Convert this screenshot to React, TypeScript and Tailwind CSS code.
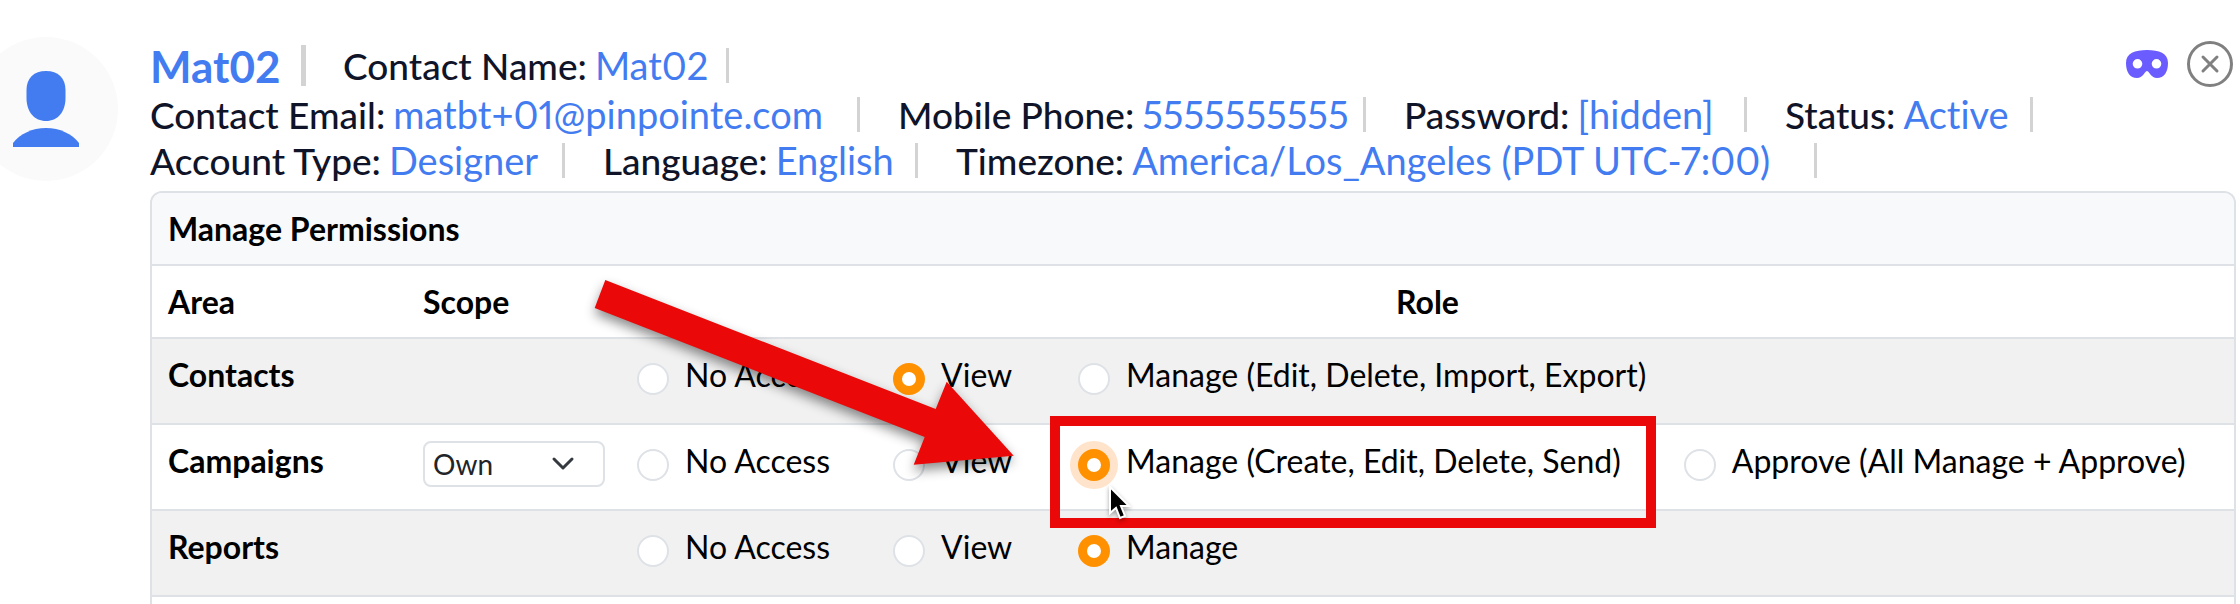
import React from "react";

type Detail = { label: string; value: string; width: string };
type Option = { label: string; checked?: boolean; focused?: boolean };
type Area = { name: string; scope?: string; striped: boolean; options: Option[] };

const lines: Detail[][] = [
  [
    { label: "Contact Email:", value: "matbt+01@pinpointe.com", width: "w-[748px]" },
    { label: "Mobile Phone:", value: "5555555555", width: "w-[506px]" },
    { label: "Password:", value: "[hidden]", width: "w-[381px]" },
    { label: "Status:", value: "Active", width: "w-[286px]" },
  ],
  [
    { label: "Account Type:", value: "Designer", width: "w-[453px]" },
    { label: "Language:", value: "English", width: "w-[353px]" },
    { label: "Timezone:", value: "America/Los_Angeles (PDT UTC-7:00)", width: "w-[899px]" },
  ],
];

const areas: Area[] = [
  {
    name: "Contacts",
    striped: true,
    options: [
      { label: "No Access" },
      { label: "View", checked: true },
      { label: "Manage (Edit, Delete, Import, Export)" },
    ],
  },
  {
    name: "Campaigns",
    scope: "Own",
    striped: false,
    options: [
      { label: "No Access" },
      { label: "View" },
      { label: "Manage (Create, Edit, Delete, Send)", checked: true, focused: true },
      { label: "Approve (All Manage + Approve)" },
    ],
  },
  {
    name: "Reports",
    striped: true,
    options: [{ label: "No Access" }, { label: "View" }, { label: "Manage", checked: true }],
  },
];

function DetailItem({ label, value, width }: Detail) {
  return (
    <div className={`flex shrink-0 items-center ${width}`}>
      <div className="flex items-baseline gap-2 whitespace-nowrap leading-[46px]">
        <span className="text-[37px] font-medium text-[#0f1428]">{label}</span>
        <span className="text-[38px] lining-nums proportional-nums text-[#437cf0] [font-variant-ligatures:none]">{value}</span>
      </div>
      <span className="ml-auto mr-[38px] h-[35px] w-[3px] shrink-0 bg-[#d3d3d3]" />
    </div>
  );
}

function RoleOption({ area, option }: { area: string; option: Option }) {
  const look = option.checked ? "border-[9px] border-[#ff9100]" : "border-2 border-[#dee2e6]";
  const ring = option.focused ? "ring-8 ring-[#ffe3ca]" : "";
  return (
    <label className="flex min-w-[122px] items-start gap-4 whitespace-nowrap">
      <input
        type="radio"
        name={area}
        defaultChecked={option.checked}
        className={`mt-2 size-8 shrink-0 appearance-none rounded-full bg-white ${look} ${ring}`}
      />
      {option.label}
    </label>
  );
}

function Avatar() {
  return (
    <svg viewBox="0 0 144 144" className="mt-[37px] -ml-[26px] size-36 shrink-0" aria-hidden="true">
      <circle cx="72" cy="72" r="72" fill="#fafafa" />
      <path d="M72 34c12 0 19.500 7 19.500 19v8c0 14-8 23-19.500 23s-19.500-9-19.500-23v-8c0-12 7.500-19 19.500-19z" fill="#437cf0" />
      <path d="M39 110v-4c7-9 19-15 33-15s26 6 33 15v4z" fill="#437cf0" />
    </svg>
  );
}

export default function App() {
  return (
    <div className="relative flex h-screen overflow-hidden bg-white font-['Lato',sans-serif]">
      <Avatar />
      <main className="ml-8 mr-1 flex min-w-0 grow flex-col">
        <header className="flex justify-between pt-10">
          <div className="flex h-[51px] items-center">
            <h1 className="w-[151px] text-[44px] font-bold text-[#437cf0]">Mat02</h1>
            <span className="mr-[37px] h-[41px] w-[5px] shrink-0 bg-[#d3d3d3]" />
            <DetailItem label="Contact Name:" value="Mat02" width="w-[424px]" />
          </div>
          <div className="flex h-12 items-center gap-[19px] pr-[3px]">
            <button aria-label="Masquerade as contact">
              <svg viewBox="0 0 42 29" className="h-[29px] w-[42px]">
                <path
                  fill="#6a5cff"
                  fillRule="evenodd"
                  d="M21 0C9 0 0 3 0 13c0 9 4 15 11 15 6 0 7-6 10-7 3 1 4 7 10 7 7 0 11-6 11-15C42 3 33 0 21 0zM11.500 9a4.800 4.800 0 1 1 0 9.600 4.800 4.800 0 0 1 0-9.600zM30.500 9a4.800 4.800 0 1 1 0 9.600 4.800 4.800 0 0 1 0-9.600z"
                />
              </svg>
            </button>
            <button aria-label="Close">
              <svg viewBox="0 0 46 46" className="size-[46px]" fill="none" stroke="#808080" strokeWidth="3" strokeLinecap="round">
                <circle cx="23" cy="23" r="21.500" />
                <path d="M16 16l14 14M30 16l-14 14" />
              </svg>
            </button>
          </div>
        </header>
        {lines.map((line, i) => (
          <div key={i} className="flex h-[46px] items-center">
            {line.map((d) => (
              <DetailItem key={d.label} {...d} />
            ))}
          </div>
        ))}
        <section className="mt-2 grow overflow-hidden rounded-t-xl border-2 border-b-0 border-[#dee2e6] text-[32px] leading-10 text-black">
          <h2 className="h-[73px] border-b-2 border-[#dee2e6] bg-[#f8f9fb] px-4 pt-4 font-bold">Manage Permissions</h2>
          <table className="w-full table-fixed border-separate border-spacing-0">
            <colgroup>
              <col className="w-[255px]" />
              <col className="w-[214px]" />
              <col />
            </colgroup>
            <thead>
              <tr className="h-[73px] text-left align-top *:border-b-2 *:border-[#dee2e6] *:px-4 *:pt-4 *:font-bold">
                <th>Area</th>
                <th>Scope</th>
                <th className="text-center">Role</th>
              </tr>
            </thead>
            <tbody>
              {areas.map((area) => (
                <tr
                  key={area.name}
                  className={`h-[86px] align-top *:border-b-2 *:border-[#dee2e6] *:px-4 *:pt-4 ${area.striped ? "bg-[#f1f1f2]" : "bg-white"}`}
                >
                  <th scope="row" className="text-left font-bold">{area.name}</th>
                  <td>
                    {area.scope && (
                      <div className="relative w-[182px]">
                        <select
                          aria-label={`${area.name} scope`}
                          defaultValue={area.scope}
                          className="block h-[46px] w-full appearance-none rounded-lg border-2 border-[#dee2e6] bg-white pl-2 text-[28px] leading-8 text-[#212529]"
                        >
                          <option>{area.scope}</option>
                        </select>
                        <svg viewBox="0 0 24 16" className="pointer-events-none absolute right-[30px] top-[15px] h-4 w-6" fill="none" stroke="#343a40" strokeWidth="3" strokeLinecap="round" strokeLinejoin="round">
                          <path d="M3 3l9 9 9-9" />
                        </svg>
                      </div>
                    )}
                  </td>
                  <td>
                    <div className="flex gap-[63px]">
                      {area.options.map((o) => (
                        <RoleOption key={o.label} area={area.name} option={o} />
                      ))}
                    </div>
                  </td>
                </tr>
              ))}
            </tbody>
          </table>
        </section>
      </main>

      <div className="pointer-events-none absolute left-[1050px] top-[416px] h-[112px] w-[606px] border-[10px] border-[#ea0808]" />
      <svg viewBox="0 0 440 210" className="pointer-events-none absolute left-[585px] top-[270px] h-[210px] w-[440px] overflow-visible drop-shadow-[0_6px_6px_rgba(0,0,0,0.45)]">
        <path d="M20.300 10L350.700 139L361.700 111.700L428.700 185.700L328.700 194.700L339.700 167L9.700 38z" fill="#ea0808" />
      </svg>
      <svg viewBox="0 0 24 36" className="pointer-events-none absolute left-[1108px] top-[484px] h-9 w-6 drop-shadow-[0_2px_2px_rgba(0,0,0,0.35)]">
        <path d="M2 3v26l6-5 4 10 5-2-4-10h8z" fill="#000" stroke="#fff" strokeWidth="2" />
      </svg>
    </div>
  );
}
